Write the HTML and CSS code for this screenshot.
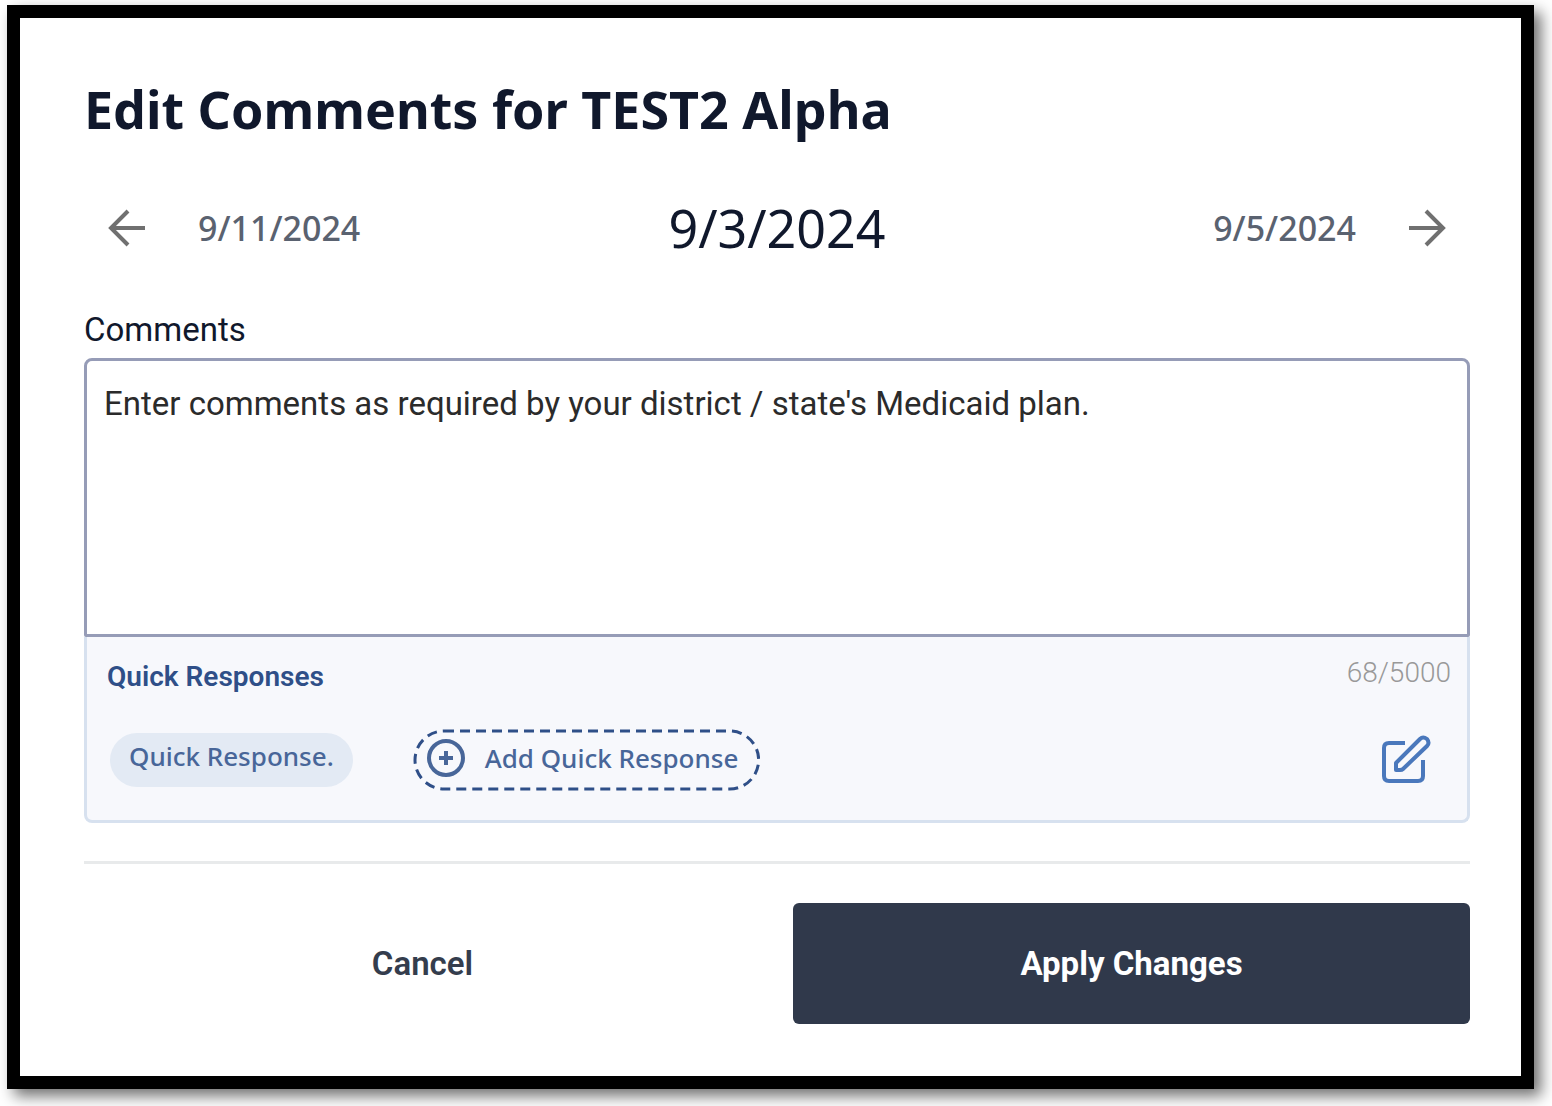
FILE: index.html
```html
<!DOCTYPE html>
<html lang="en">

<head>
    <meta charset="UTF-8">
    <meta name="viewport" content="width=device-width, initial-scale=1.0">
    <title>Edit Comments</title>
    <link rel="stylesheet" href="styles.css">
</head>

<body>
    <main class="dialog">
        <h1>Edit Comments for TEST2 Alpha</h1>

        <nav class="dates">
            <button type="button" class="date-btn">
                <svg class="arrow" viewBox="0 0 38 38" aria-hidden="true">
                    <path d="M37 19H3M20 2L3 19L20 36" />
                </svg>
                <span>9/11/2024</span>
            </button>
            <h2>9/3/2024</h2>
            <button type="button" class="date-btn next">
                <span>9/5/2024</span>
                <svg class="arrow" viewBox="0 0 38 38" aria-hidden="true">
                    <path d="M1 19H35M18 2L35 19L18 36" />
                </svg>
            </button>
        </nav>

        <form id="commentForm">
            <label for="comments">Comments</label>
            <textarea id="comments" name="comments" maxlength="5000">Enter comments as required by your district / state's Medicaid plan.</textarea>

            <section class="quick">
                <div class="quick-row">
                    <h3>Quick Responses</h3>
                    <span class="counter">68/5000</span>
                </div>
                <div class="quick-row responses">
                    <button type="button" class="chip">Quick Response.</button>
                    <button type="button" class="add-chip">
                        <svg class="dash" aria-hidden="true">
                            <rect x="2" y="2" rx="29" />
                        </svg>
                        <svg class="plus" viewBox="0 0 38 38" aria-hidden="true">
                            <circle cx="19" cy="19" r="17" />
                            <path d="M19 12V26M12 19H26" />
                        </svg>
                        Add Quick Response
                    </button>
                    <button type="button" class="edit-btn" aria-label="Edit quick responses">
                        <svg viewBox="0 0 50 50">
                            <path d="M24 8H8Q3 8 3 13V41Q3 46 8 46H37Q42 46 42 41V25" />
                            <path d="M15 35V28L39 4Q42 1 46 4Q49 8 46 11L22 34Q21 35 19 35Z" />
                        </svg>
                    </button>
                </div>
            </section>

            <div class="actions">
                <button type="button" class="cancel">Cancel</button>
                <button type="submit" class="apply">Apply Changes</button>
            </div>
        </form>
    </main>
</body>

</html>
```

FILE: styles.css
```css
* {
    box-sizing: border-box;
}

body {
    margin: 0;
    padding: 5px 18px 17px 7px;
    background-color: #ffffff;
    color: #10182c;
    font-family: Roboto, sans-serif;
}

h1,
h2,
h3 {
    margin: 0;
}

button {
    padding: 0;
    border: none;
    background: none;
    color: inherit;
    font-family: inherit;
    cursor: pointer;
}

svg {
    fill: none;
    stroke: currentColor;
}

.dialog {
    padding: 56px 51px 52px 64px;
    border: 13px solid #000000;
    background-color: #ffffff;
    box-shadow: 7px 7px 14px #707070;
}

h1 {
    font-family: "Noto Sans", sans-serif;
    font-size: 52px;
    font-weight: 700;
    line-height: 70px;
}

/* date switcher */
.dates {
    display: grid;
    grid-template-columns: 1fr auto 1fr;
    align-items: center;
    margin-top: 48px;
    padding: 0 24px;
    font-family: "Noto Sans", sans-serif;
}

.dates h2 {
    font-size: 52px;
    font-weight: 400;
    line-height: 72px;
}

.date-btn {
    display: flex;
    align-items: center;
    gap: 52px;
    color: #5a6270;
    font-size: 34px;
    font-weight: 500;
    line-height: 40px;
}

.date-btn.next {
    justify-self: end;
}

.arrow {
    width: 38px;
    height: 38px;
    color: #707070;
    stroke-width: 4;
}

/* comment box */
label {
    display: block;
    margin-top: 46px;
    font-size: 33px;
    line-height: 40px;
}

textarea {
    display: block;
    width: 100%;
    height: 279px;
    margin-top: 8px;
    padding: 23px 17px;
    border: 3px solid #969cb7;
    border-radius: 8px 8px 2px 2px;
    outline: none;
    resize: none;
    color: #2b2b2b;
    font-family: inherit;
    font-size: 33px;
    line-height: 40px;
}

.quick {
    padding: 14px 16px 29px 20px;
    border: 3px solid #d7e1ef;
    border-top: none;
    border-radius: 0 0 8px 8px;
    background-color: #f7f8fc;
    color: #2f4f88;
}

.quick-row {
    display: flex;
    align-items: center;
}

.quick-row h3 {
    margin-top: 8px;
    font-size: 28px;
    font-weight: 600;
    line-height: 36px;
}

.counter {
    margin-left: auto;
    color: #999999;
    font-size: 28px;
    font-weight: 300;
    line-height: 40px;
}

.responses {
    margin-top: 34px;
}

.chip,
.add-chip {
    font-family: "Noto Sans", sans-serif;
    font-size: 26px;
    font-weight: 500;
    color: #486699;
}

.chip {
    height: 54px;
    margin: 0 60px 0 3px;
    padding: 0 19px 8px;
    border-radius: 27px;
    background-color: #e3eaf4;
}

.add-chip {
    position: relative;
    display: flex;
    align-items: center;
    gap: 20px;
    height: 62px;
    padding: 0 22px 4px 14px;
}

/* dashed outline over the button */
.dash {
    position: absolute;
    top: 0;
    left: 0;
    width: 100%;
    height: 100%;
    color: #2f4f88;
    stroke-width: 3;
    stroke-dasharray: 10 6;
}

.dash rect {
    width: calc(100% - 4px);
    height: calc(100% - 4px);
}

.plus {
    width: 38px;
    height: 38px;
    stroke-width: 4;
}

.edit-btn {
    margin-left: auto;
    margin-right: 20px;
    color: #4a78bc;
}

.edit-btn svg {
    display: block;
    width: 50px;
    height: 50px;
    stroke-width: 4;
    stroke-linejoin: round;
}

/* footer */
.actions {
    display: grid;
    grid-template-columns: 1fr 1fr;
    gap: 32px;
    margin-top: 38px;
    padding-top: 39px;
    border-top: 3px solid #e8eaeb;
}

.actions button {
    height: 121px;
    border-radius: 6px;
    font-size: 33px;
    font-weight: 600;
}

.cancel {
    color: #343d4d;
}

.actions .apply {
    background-color: #30394b;
    color: #ffffff;
    font-weight: 700;
}
```
